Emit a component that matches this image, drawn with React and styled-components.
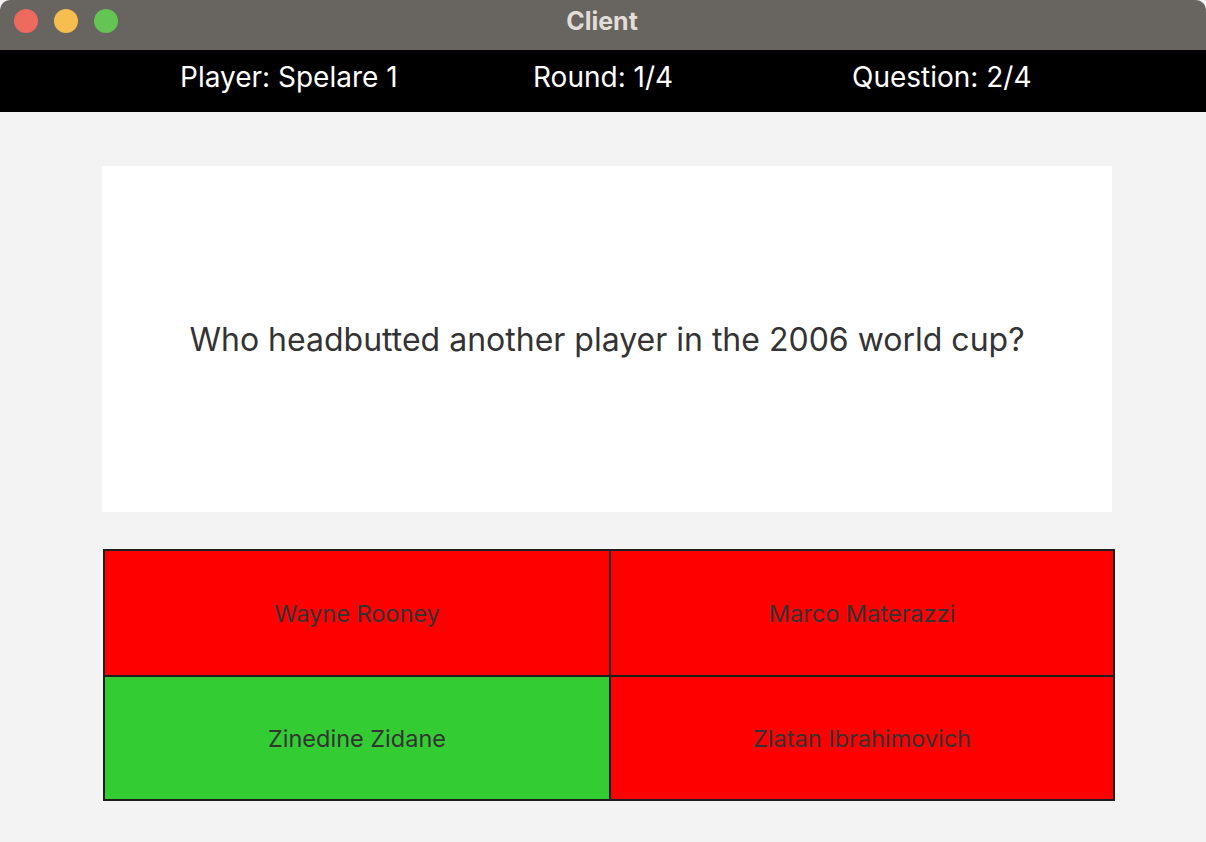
import React from "react";
import styled, { createGlobalStyle } from "styled-components";

const GlobalStyle = createGlobalStyle`
  html, body {
    margin: 0;
    padding: 0;
    background: #f3f3f3;
  }
  body {
    font-family: Inter, "Noto Sans", sans-serif;
  }
`;

const Window = styled.div`
  width: 1206px;
  height: 842px;
  display: flex;
  flex-direction: column;
  background: #f3f3f3;
  border-radius: 10px 10px 0 0;
  overflow: hidden;
`;

const TitleBar = styled.div`
  height: 50px;
  flex-shrink: 0;
  background: #686460;
  display: flex;
  align-items: center;
  padding: 0 14px;
  box-sizing: border-box;
`;

const Lights = styled.div`
  display: flex;
  gap: 16px;
  margin-top: -8px;
`;

const Light = styled.span`
  width: 24px;
  height: 24px;
  border-radius: 50%;
  background: ${(p) => p.color};
`;

const WindowTitle = styled.div`
  flex: 1;
  text-align: center;
  margin-left: -106px;
  margin-top: -9px;
  color: #e3ddd8;
  font-weight: 700;
  font-size: 25px;
`;

const StatusBar = styled.div`
  height: 62px;
  flex-shrink: 0;
  box-sizing: border-box;
  padding-bottom: 8px;
  background: #000;
  color: #fff;
  display: grid;
  grid-template-columns: 180px 353px 319px auto;
  align-items: center;
  font-size: 28px;
  white-space: nowrap;
`;

const StatusItem = styled.span`
  grid-column: ${(p) => p.col};
`;

const Main = styled.div`
  flex: 1;
  padding: 54px 0 0 102px;
  display: flex;
  flex-direction: column;
`;

const QuestionBox = styled.div`
  width: 1010px;
  height: 346px;
  background: #fff;
  display: flex;
  align-items: center;
  justify-content: center;
  color: #333;
  font-size: 32px;
`;

const Answers = styled.div`
  margin: 37px 0 0 1px;
  width: 1012px;
  box-sizing: border-box;
  border: 2px solid #1e1e1e;
  background: #1e1e1e;
  display: grid;
  grid-template-columns: 504px 502px;
  grid-template-rows: 124px 122px;
  gap: 2px;
`;

const Answer = styled.div`
  background: ${(p) => (p.correct ? "#33cc33" : "#ff0000")};
  color: #333;
  font-size: 23.5px;
  display: flex;
  align-items: center;
  justify-content: center;
`;

const answers = [
  { text: "Wayne Rooney", correct: false },
  { text: "Marco Materazzi", correct: false },
  { text: "Zinedine Zidane", correct: true },
  { text: "Zlatan Ibrahimovich", correct: false },
];

const App = () => {
  return (
    <Window>
      <GlobalStyle />
      <TitleBar>
        <Lights>
          <Light color="#ee6a5f" />
          <Light color="#f5be4f" />
          <Light color="#62c554" />
        </Lights>
        <WindowTitle>Client</WindowTitle>
      </TitleBar>
      <StatusBar>
        <StatusItem col={2}>Player: Spelare 1</StatusItem>
        <StatusItem col={3}>Round: 1/4</StatusItem>
        <StatusItem col={4}>Question: 2/4</StatusItem>
      </StatusBar>
      <Main>
        <QuestionBox>Who headbutted another player in the 2006 world cup?</QuestionBox>
        <Answers>
          {answers.map((a) => (
            <Answer key={a.text} correct={a.correct}>
              {a.text}
            </Answer>
          ))}
        </Answers>
      </Main>
    </Window>
  );
};

export default App;
